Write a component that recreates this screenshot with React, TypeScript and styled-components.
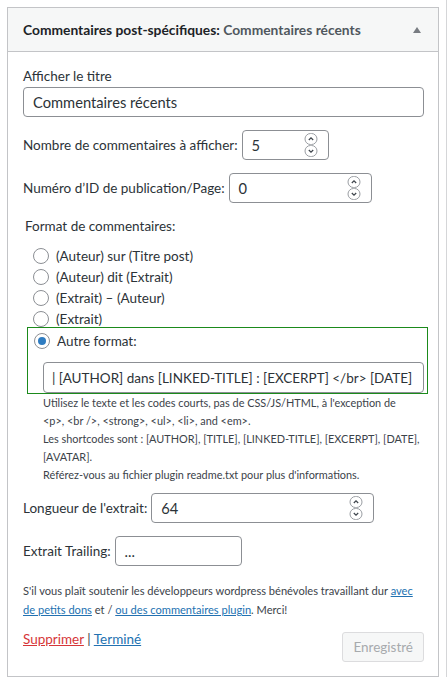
import React from 'react';
import styled, { createGlobalStyle } from 'styled-components';

const GlobalStyle = createGlobalStyle`
  html, body { margin: 0; padding: 0; background: #fff; }
  body {
    font-family: Lato, "Open Sans", sans-serif;
    font-size: 13.5px;
    color: #2c3338;
  }
  * { box-sizing: border-box; }
`;

const Page = styled.div`
  width: 447px;
  height: 677px;
  border-right: 1px solid #d5d6d8;
  padding: 7px 0 0 7px;
  overflow: hidden;
`;

const Widget = styled.section`
  width: 432px;
  height: 670px;
  border: 1px solid #c3c4c7;
  background: #fff;
  display: flex;
  flex-direction: column;
`;

const Header = styled.header`
  height: 44px;
  flex: none;
  background: #f6f7f7;
  border-bottom: 1px solid #c3c4c7;
  display: flex;
  align-items: center;
  justify-content: space-between;
  padding: 0 17px 0 15px;
`;

const Title = styled.h3`
  margin: 0;
  font-size: 13.8px;
  font-weight: 700;
  color: #1d2327;
`;

const SubTitle = styled.span`
  color: #50575e;
`;

const Toggle = styled.span`
  width: 0;
  height: 0;
  border-left: 4px solid transparent;
  border-right: 4px solid transparent;
  border-bottom: 6px solid #787c82;
`;

const Body = styled.div`
  padding: 15px 14px 0 15px;
  display: flex;
  flex-direction: column;
`;

const BlockLabel = styled.label`
  display: block;
  line-height: 19px;
  margin-bottom: 1px;
`;

const TextField = styled.div<{ $width?: number }>`
  height: 30px;
  width: ${p => (p.$width ? `${p.$width}px` : '100%')};
  border: 1px solid #8c8f94;
  border-radius: 4px;
  background: #fff;
  padding: 0 10px 0 9px;
  display: flex;
  align-items: center;
  justify-content: space-between;
  font-size: 14.7px;
  color: #2c3338;
  white-space: nowrap;
  overflow: hidden;
  flex: none;
`;

const Row = styled.div<{ $gap?: number }>`
  display: flex;
  align-items: center;
  gap: 4px;
  margin-top: ${p => p.$gap ?? 13}px;
`;

const Section = styled.div`
  margin: 14px 0 0 2px;
  line-height: 19px;
`;

const Choices = styled.div`
  margin: 9px 0 0 4px;
  display: flex;
  flex-direction: column;
`;

const Choice = styled.div`
  height: 21px;
  display: flex;
  align-items: center;
  gap: 7px;
  padding-left: 6px;
`;

const Radio = styled.span<{ $checked?: boolean }>`
  width: 16px;
  height: 16px;
  flex: none;
  border-radius: 50%;
  border: 1px solid #8c8f94;
  background: #fff;
  display: inline-flex;
  align-items: center;
  justify-content: center;
  &::after {
    content: '';
    width: 8px;
    height: 8px;
    border-radius: 50%;
    background: ${p => (p.$checked ? '#2f7cc1' : 'transparent')};
  }
`;

const CustomBox = styled.div`
  width: 401px;
  margin-top: -2px;
  border: 1px solid #1b8a1b;
  padding: 2px 3px 0 0;
  display: flex;
  flex-direction: column;
`;

const FormatInput = styled(TextField)`
  width: 381px;
  height: 31px;
  margin: 11px 0 0 15px;
  justify-content: flex-start;
  font-size: 13.5px;
  padding-left: 8px;
`;

const Help = styled.p`
  margin: 0 0 0 16px;
  font-size: 10.9px;
  line-height: 18px;
  color: #3c434a;
`;

const Support = styled.p`
  margin: 15px 0 0;
  font-size: 11.1px;
  line-height: 19px;
  color: #3c434a;
`;

const Link = styled.a<{ $danger?: boolean }>`
  color: ${p => (p.$danger ? '#d63638' : '#2271b1')};
  text-decoration: underline;
  cursor: pointer;
`;

const Actions = styled.div`
  margin-top: 8px;
  display: flex;
  justify-content: space-between;
  align-items: flex-start;
`;

const ActionLinks = styled.div`
  line-height: 19px;
  padding-top: 3px;
  color: #3c434a;
`;

const SaveButton = styled.button`
  margin-top: 5px;
  height: 30px;
  padding: 0 10px;
  border: 1px solid #dcdcde;
  border-radius: 3px;
  background: #f6f7f7;
  color: #a7aaad;
  font-family: inherit;
  font-size: 13.5px;
`;

const Spinner = () => (
  <svg width="14" height="24" viewBox="0 0 14 24" aria-hidden="true">
    <rect x="1" y="0.5" width="12" height="11" rx="5.5" fill="#fff" stroke="#9a9ea3" />
    <rect x="1" y="12.5" width="12" height="11" rx="5.5" fill="#fff" stroke="#9a9ea3" />
    <path d="M4.8 7 L7 4.8 L9.2 7" fill="none" stroke="#3c434a" strokeWidth="1.2" />
    <path d="M4.8 17 L7 19.2 L9.2 17" fill="none" stroke="#3c434a" strokeWidth="1.2" />
  </svg>
);

const formats = [
  '(Auteur) sur (Titre post)',
  '(Auteur) dit (Extrait)',
  '(Extrait) – (Auteur)',
  '(Extrait)',
];

export default function App() {
  return (
    <>
      <GlobalStyle />
      <Page>
        <Widget>
          <Header>
            <Title>
              Commentaires post-spécifiques: <SubTitle>Commentaires récents</SubTitle>
            </Title>
            <Toggle />
          </Header>
          <Body>
            <BlockLabel>Afficher le titre</BlockLabel>
            <TextField>Commentaires récents</TextField>

            <Row>
              <span>Nombre de commentaires à afficher:</span>
              <TextField $width={87}>
                5<Spinner />
              </TextField>
            </Row>

            <Row>
              <span>Numéro d’ID de publication/Page:</span>
              <TextField $width={143}>
                0<Spinner />
              </TextField>
            </Row>

            <Section>Format de commentaires:</Section>
            <Choices>
              {formats.map(f => (
                <Choice key={f}>
                  <Radio />
                  <span>{f}</span>
                </Choice>
              ))}
              <CustomBox>
                <Choice>
                  <Radio $checked />
                  <span>Autre format:</span>
                </Choice>
                <FormatInput>| [AUTHOR] dans [LINKED-TITLE] : [EXCERPT] &lt;/br&gt; [DATE]</FormatInput>
              </CustomBox>
              <Help>
                Utilisez le texte et les codes courts, pas de CSS/JS/HTML, à l'exception de
                <br />
                &lt;p&gt;, &lt;br /&gt;, &lt;strong&gt;, &lt;ul&gt;, &lt;li&gt;, and &lt;em&gt;.
                <br />
                Les shortcodes sont : [AUTHOR], [TITLE], [LINKED-TITLE], [EXCERPT], [DATE],
                <br />
                [AVATAR].
                <br />
                Référez-vous au fichier plugin readme.txt pour plus d'informations.
              </Help>
            </Choices>

            <Row $gap={9}>
              <span>Longueur de l'extrait:</span>
              <TextField $width={223}>
                64<Spinner />
              </TextField>
            </Row>

            <Row>
              <span>Extrait Trailing:</span>
              <TextField $width={127}>...</TextField>
            </Row>

            <Support>
              S'il vous plaît soutenir les développeurs wordpress bénévoles travaillant dur{' '}
              <Link>avec de petits dons</Link> et / <Link>ou des commentaires plugin</Link>. Merci!
            </Support>

            <Actions>
              <ActionLinks>
                <Link $danger>Supprimer</Link> | <Link>Terminé</Link>
              </ActionLinks>
              <SaveButton disabled>Enregistré</SaveButton>
            </Actions>
          </Body>
        </Widget>
      </Page>
    </>
  );
}
